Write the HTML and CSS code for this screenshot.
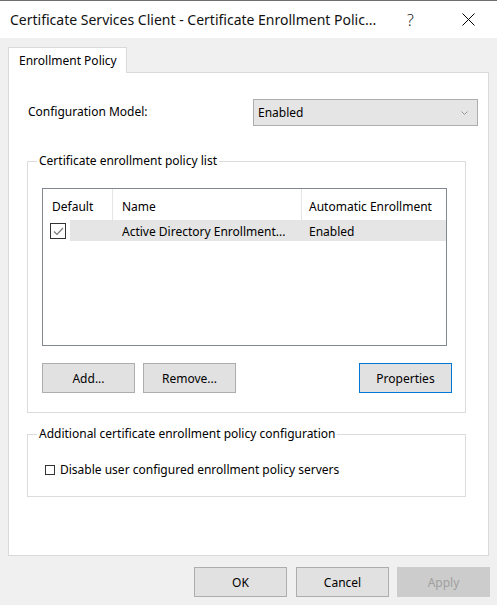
FILE: index.html
```html
<!DOCTYPE html>
<html>
<head>
<meta charset="utf-8">
<link rel="stylesheet" href="styles.css">
</head>
<body>
<div class="window">
  <div class="titlebar">
    <span class="title">Certificate Services Client - Certificate Enrollment Polic...</span>
    <span class="help">?</span>
    <span class="close">
      <svg width="13" height="13" viewBox="0 0 13 13"><path d="M0.5 0.5 L12.5 12.5 M12.5 0.5 L0.5 12.5" stroke="#000" stroke-width="1" fill="none"/></svg>
    </span>
  </div>
  <div class="body">
    <div class="tabs">
      <div class="tab">Enrollment Policy</div>
    </div>
    <div class="panel">
      <div class="config-row">
        <span class="label">Configuration Model:</span>
        <div class="combo">
          <span>Enabled</span>
          <svg class="chev" width="7" height="4" viewBox="0 0 7 4"><path d="M0.5 0.5 L3.5 3.5 L6.5 0.5" stroke="#999" stroke-width="1" fill="none"/></svg>
        </div>
      </div>
      <fieldset class="group group-list">
        <legend>Certificate enrollment policy list</legend>
        <div class="list">
          <div class="list-head">
            <div class="col c1">Default</div>
            <div class="col c2">Name</div>
            <div class="col c3">Automatic Enrollment</div>
          </div>
          <div class="list-row">
            <div class="cell c1"><span class="chk checked"><svg width="13" height="13" viewBox="0 0 13 13"><path d="M2 6.5 L5 9.5 L11 3" stroke="#7a7a7a" stroke-width="1.2" fill="none"/></svg></span></div>
            <div class="cell c2 sel">Active Directory Enrollment...</div>
            <div class="cell c3 sel">Enabled</div>
          </div>
        </div>
        <div class="btn-row">
          <button class="btn">Add...</button>
          <button class="btn">Remove...</button>
          <button class="btn default">Properties</button>
        </div>
      </fieldset>
      <fieldset class="group group-extra">
        <legend>Additional certificate enrollment policy configuration</legend>
        <label class="check-line"><span class="box"></span>Disable user configured enrollment policy servers</label>
      </fieldset>
    </div>
    <div class="footer">
      <button class="btn">OK</button>
      <button class="btn">Cancel</button>
      <button class="btn disabled">Apply</button>
    </div>
  </div>
</div>
</body>
</html>
```

FILE: styles.css
```css
* { box-sizing: border-box; }
html, body { margin: 0; padding: 0; }
body {
  width: 497px;
  height: 605px;
  background: #f0f0f0;
  font-family: "Noto Sans", "Liberation Sans", sans-serif;
  font-size: 12px;
  color: #000;
  overflow: hidden;
}
.window { width: 497px; height: 605px; display: flex; flex-direction: column; }
.titlebar {
  height: 38px;
  background: #fff;
  border-top: 1px solid #6e6e6e;
  display: flex;
  align-items: center;
  padding-left: 10px;
  font-size: 14px;
  color: #111;
}
.title { flex: 1; white-space: nowrap; }
.help { width: 55px; font-size: 16px; font-weight: 300; color: #222; }
.close { width: 35px; display: flex; align-items: center; }
.body { flex: 1; padding: 9px 8px 0 8px; display: flex; flex-direction: column; }
.tabs { display: flex; height: 25px; }
.tab {
  width: 119px;
  height: 26px;
  background: #fff;
  border: 1px solid #d9d9d9;
  border-bottom: none;
  padding: 4px 0 0 10px;
  position: relative;
  z-index: 1;
}
.panel {
  height: 484px;
  background: #fff;
  border: 1px solid #d9d9d9;
  padding: 26px 10px 0 18px;
  width: 481px;
}
.config-row { display: flex; align-items: center; height: 27px; }
.label { width: 226px; flex-shrink: 0; padding-left: 1px; margin-top: -3px; }
.combo {
  width: 225px;
  flex-shrink: 0;
  height: 27px;
  background: #e5e5e5;
  border: 1px solid #adadad;
  display: flex;
  align-items: center;
  justify-content: space-between;
  padding: 0 9px 0 4px;
}
.chev { margin-top: 1px; }
.group {
  margin: 0;
  border: 1px solid #dcdcdc;
  min-width: 0;
  width: 439px;
}
.group legend { padding: 0 2px; line-height: 16px; }
.group-list { margin-top: 27px; height: 260px; padding: 19px 13px 0 14px; }
.group-list legend { margin-left: -5px; }
.list {
  width: 405px;
  height: 158px;
  border: 1px solid #828790;
  background: #fff;
}
.list-head { display: flex; height: 31px; }
.col { border-right: 1px solid #e5e5e5; padding: 9px 0 0 9px; height: 31px; white-space: nowrap; }
.col.c3 { border-right: none; padding-left: 7px; }
.c1 { width: 70px; }
.c2 { width: 189px; }
.c3 { width: 144px; }
.list-row { display: flex; height: 21px; }
.cell { height: 21px; padding: 3px 0 0 9px; white-space: nowrap; }
.cell.c3 { padding-left: 7px; }
.cell.sel { background: #e5e5e5; }
.cell.c1 { padding: 2px 0 0 7px; display: flex; }
.cell.c1::after { content: ""; flex: 1; background: #e5e5e5; margin-left: 4px; margin-top: -2px; height: 21px; }
.chk {
  width: 16px; height: 16px;
  border: 1px solid #333;
  display: flex; align-items: center; justify-content: center;
  background: #fff;
  margin-top: 1px;
}
.btn-row { display: flex; margin-top: 17px; gap: 8px; }
.btn {
  width: 93px;
  height: 30px;
  background: #e1e1e1;
  border: 1px solid #adadad;
  font-family: inherit;
  font-size: 12px;
  color: #000;
  padding: 0;
}
.btn.default { margin-left: auto; border-color: #0078d7; }
.group-extra { margin-top: 13px; height: 71px; padding: 19px 10px 0 17px; }
.group-extra legend { margin-left: -8px; }
.check-line { display: flex; align-items: center; }
.box {
  width: 10px; height: 10px;
  border: 1px solid #333;
  background: #fff;
  margin-right: 5px;
}
.footer { display: flex; justify-content: flex-end; gap: 9px; padding: 11px 0 0 0; margin-right: -1px; }
.btn.disabled { background: #cccccc; border-color: #cccccc; color: #a0a0a0; margin-left: -1px; }
```
